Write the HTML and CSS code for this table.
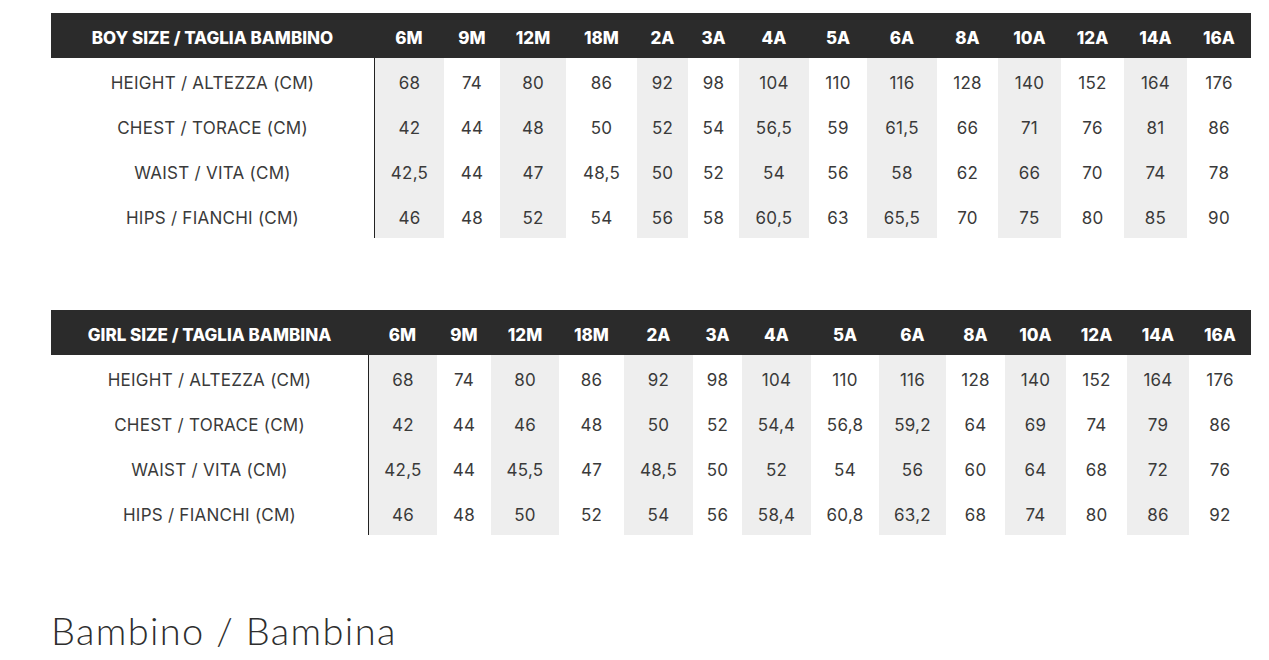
FILE: index.html
```html
<!DOCTYPE html>
<html lang="it">
<head>
<meta charset="utf-8">
<title>Bambino / Bambina</title>
<link rel="stylesheet" href="styles.css">
</head>
<body>
<main class="page">
  <table class="size-table boy">
    <colgroup>
      <col><col><col><col><col><col><col><col><col><col><col><col><col><col><col>
    </colgroup>
    <thead>
      <tr><th>BOY SIZE / TAGLIA BAMBINO</th><th>6M</th><th>9M</th><th>12M</th><th>18M</th><th>2A</th><th>3A</th><th>4A</th><th>5A</th><th>6A</th><th>8A</th><th>10A</th><th>12A</th><th>14A</th><th>16A</th></tr>
    </thead>
    <tbody>
      <tr><td>HEIGHT / ALTEZZA (CM)</td><td>68</td><td>74</td><td>80</td><td>86</td><td>92</td><td>98</td><td>104</td><td>110</td><td>116</td><td>128</td><td>140</td><td>152</td><td>164</td><td>176</td></tr>
      <tr><td>CHEST / TORACE (CM)</td><td>42</td><td>44</td><td>48</td><td>50</td><td>52</td><td>54</td><td>56,5</td><td>59</td><td>61,5</td><td>66</td><td>71</td><td>76</td><td>81</td><td>86</td></tr>
      <tr><td>WAIST / VITA (CM)</td><td>42,5</td><td>44</td><td>47</td><td>48,5</td><td>50</td><td>52</td><td>54</td><td>56</td><td>58</td><td>62</td><td>66</td><td>70</td><td>74</td><td>78</td></tr>
      <tr><td>HIPS / FIANCHI (CM)</td><td>46</td><td>48</td><td>52</td><td>54</td><td>56</td><td>58</td><td>60,5</td><td>63</td><td>65,5</td><td>70</td><td>75</td><td>80</td><td>85</td><td>90</td></tr>
    </tbody>
  </table>

  <table class="size-table girl">
    <colgroup>
      <col><col><col><col><col><col><col><col><col><col><col><col><col><col><col>
    </colgroup>
    <thead>
      <tr><th>GIRL SIZE / TAGLIA BAMBINA</th><th>6M</th><th>9M</th><th>12M</th><th>18M</th><th>2A</th><th>3A</th><th>4A</th><th>5A</th><th>6A</th><th>8A</th><th>10A</th><th>12A</th><th>14A</th><th>16A</th></tr>
    </thead>
    <tbody>
      <tr><td>HEIGHT / ALTEZZA (CM)</td><td>68</td><td>74</td><td>80</td><td>86</td><td>92</td><td>98</td><td>104</td><td>110</td><td>116</td><td>128</td><td>140</td><td>152</td><td>164</td><td>176</td></tr>
      <tr><td>CHEST / TORACE (CM)</td><td>42</td><td>44</td><td>46</td><td>48</td><td>50</td><td>52</td><td>54,4</td><td>56,8</td><td>59,2</td><td>64</td><td>69</td><td>74</td><td>79</td><td>86</td></tr>
      <tr><td>WAIST / VITA (CM)</td><td>42,5</td><td>44</td><td>45,5</td><td>47</td><td>48,5</td><td>50</td><td>52</td><td>54</td><td>56</td><td>60</td><td>64</td><td>68</td><td>72</td><td>76</td></tr>
      <tr><td>HIPS / FIANCHI (CM)</td><td>46</td><td>48</td><td>50</td><td>52</td><td>54</td><td>56</td><td>58,4</td><td>60,8</td><td>63,2</td><td>68</td><td>74</td><td>80</td><td>86</td><td>92</td></tr>
    </tbody>
  </table>

  <h2 class="section-title">Bambino / Bambina</h2>
</main>
</body>
</html>
```

FILE: styles.css
```css
html, body {
  margin: 0;
  padding: 0;
  background: #ffffff;
}

.page {
  padding: 13px 18px 0 51px;
  font-family: Inter, Roboto, "Liberation Sans", Arial, sans-serif;
  color: #333333;
}

.size-table {
  width: 1200px;
  table-layout: fixed;
  border-collapse: separate;
  border-spacing: 0;
}

.size-table + .size-table {
  margin-top: 72px;
}

.size-table th,
.size-table td {
  height: 45px;
  box-sizing: border-box;
  padding: 5px 0 0 0;
  text-align: center;
  vertical-align: middle;
  white-space: nowrap;
}

.size-table th {
  background: #2b2b2b;
  color: #ffffff;
  font-size: 17px;
  font-weight: 800;
  letter-spacing: 0;
}

.size-table td {
  font-size: 17px;
  font-weight: 400;
  color: #3a3a3a;
  letter-spacing: 0.25px;
}

.size-table tbody td:nth-child(2) {
  border-left: 1px solid #222222;
}

.size-table tbody td:nth-child(2n) {
  background: #eeeeee;
}

/* column widths, boy table */
.boy col:nth-child(1) { width: 323px; }
.boy col:nth-child(2) { width: 70px; }
.boy col:nth-child(3) { width: 56px; }
.boy col:nth-child(4) { width: 66px; }
.boy col:nth-child(5) { width: 71px; }
.boy col:nth-child(6) { width: 51px; }
.boy col:nth-child(7) { width: 51px; }
.boy col:nth-child(8) { width: 70px; }
.boy col:nth-child(9) { width: 58px; }
.boy col:nth-child(10) { width: 70px; }
.boy col:nth-child(11) { width: 61px; }
.boy col:nth-child(12) { width: 63px; }
.boy col:nth-child(13) { width: 63px; }
.boy col:nth-child(14) { width: 63px; }
.boy col:nth-child(15) { width: 64px; }

/* column widths, girl table */
.girl col:nth-child(1) { width: 317px; }
.girl col:nth-child(2) { width: 69px; }
.girl col:nth-child(3) { width: 54px; }
.girl col:nth-child(4) { width: 68px; }
.girl col:nth-child(5) { width: 65px; }
.girl col:nth-child(6) { width: 69px; }
.girl col:nth-child(7) { width: 49px; }
.girl col:nth-child(8) { width: 69px; }
.girl col:nth-child(9) { width: 68px; }
.girl col:nth-child(10) { width: 67px; }
.girl col:nth-child(11) { width: 59px; }
.girl col:nth-child(12) { width: 61px; }
.girl col:nth-child(13) { width: 61px; }
.girl col:nth-child(14) { width: 62px; }
.girl col:nth-child(15) { width: 62px; }

.section-title {
  margin: 72px 0 0 0;
  font-family: Lato, "Open Sans", sans-serif;
  font-weight: 300;
  font-size: 38px;
  line-height: 46px;
  color: #2e2e2e;
  letter-spacing: 1.35px;
}
```
